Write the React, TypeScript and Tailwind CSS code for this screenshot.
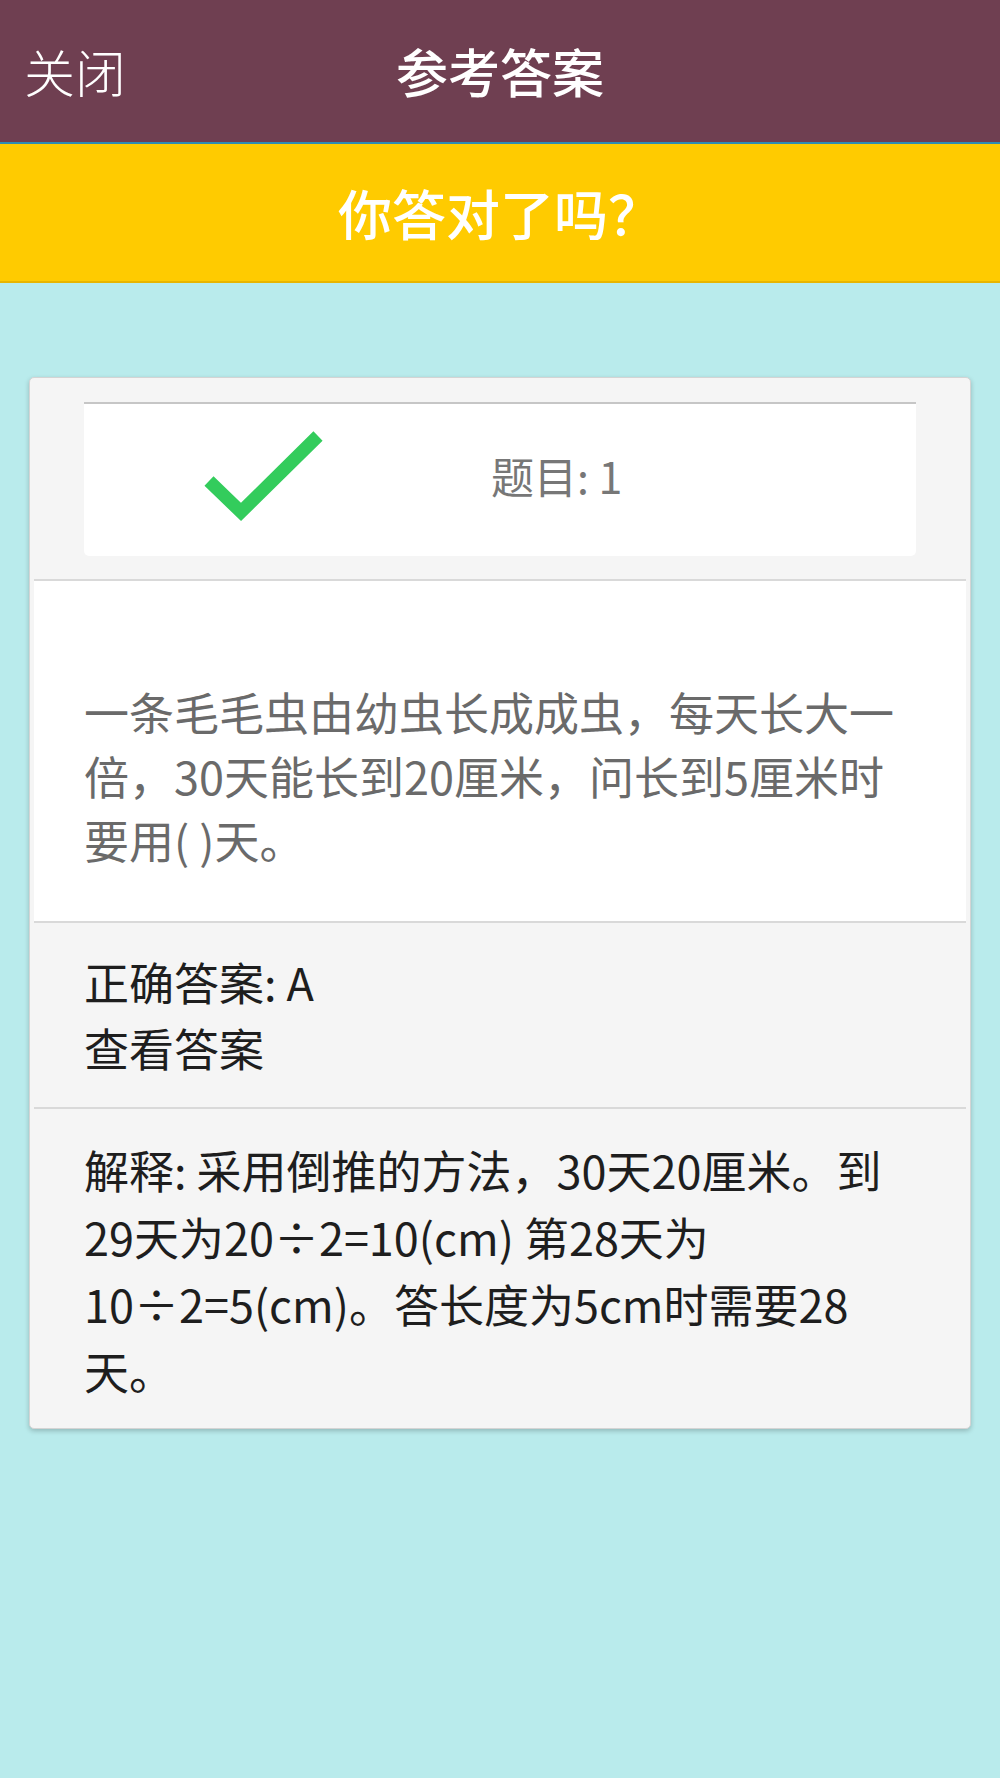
import React from "react";

export default function App() {
  const font = { fontFamily: '"Noto Sans CJK SC", "Noto Sans", sans-serif' };
  return (
    <div
      className="min-h-[1778px] w-full bg-[#b9ebec] font-['Noto_Sans_CJK_SC','Noto_Sans',sans-serif]"
      style={font}
    >
      <header className="grid h-[144px] grid-cols-[1fr_auto_1fr] items-center border-b-2 border-[#2e8db3] bg-[#6f3f51] text-white">
        <span className="pl-[24px] text-[51px] font-light leading-none">关闭</span>
        <h1 className="text-[52px] font-medium leading-none">参考答案</h1>
        <span />
      </header>
      <div className="flex h-[139px] items-center justify-center border-b-2 border-[#e8b500] bg-[#ffcb00]">
        <span className="text-[54px] font-medium leading-none text-white">你答对了吗？</span>
      </div>
      <div className="px-[29px] pt-[94px]">
        <div className="rounded-[5px] border border-[#d4d4d4] bg-[#f5f5f5] p-[4px] shadow-[0_2px_5px_rgba(0,0,0,0.22)]">
          <div className="border-b-2 border-[#d9d9d9] px-[50px] pb-[23px] pt-[20px]">
            <div className="flex h-[154px] items-center rounded-b-[5px] border-t-2 border-[#c6c6c6] bg-white">
              <svg
                className="mb-[6px] ml-[115px] shrink-0"
                width="125"
                height="95"
                viewBox="0 0 125 95"
              >
                <polyline
                  points="10,51 42,82 119,6"
                  fill="none"
                  stroke="#33cc5c"
                  strokeWidth="13"
                  strokeLinecap="butt"
                  strokeLinejoin="miter"
                />
              </svg>
              <span className="mb-[10px] ml-[167px] text-[43px] leading-none text-[#777777]">题目: 1</span>
            </div>
          </div>
          <div className="border-b-2 border-[#d9d9d9] bg-white px-[50px] pb-[49px] pt-[99px]">
            <p className="text-[45px] leading-[64px] text-[#6a6a6a]">
              一条毛毛虫由幼虫长成成虫，每天长大一倍，30天能长到20厘米，问长到5厘米时要用( )天。
            </p>
          </div>
          <div className="border-b-2 border-[#d9d9d9] px-[50px] pb-[26px] pt-[26px] text-[45px] leading-[66px] text-[#1e1e1e]">
            <p>正确答案: A</p>
            <p>查看答案</p>
          </div>
          <div className="px-[50px] pb-[20px] pt-[27px]">
            <p className="text-[45px] leading-[67px] text-[#1e1e1e]">
              解释: 采用倒推的方法，30天20厘米。到29天为20÷2=10(cm) 第28天为10÷2=5(cm)。答长度为5cm时需要28天。
            </p>
          </div>
        </div>
      </div>
    </div>
  );
}
